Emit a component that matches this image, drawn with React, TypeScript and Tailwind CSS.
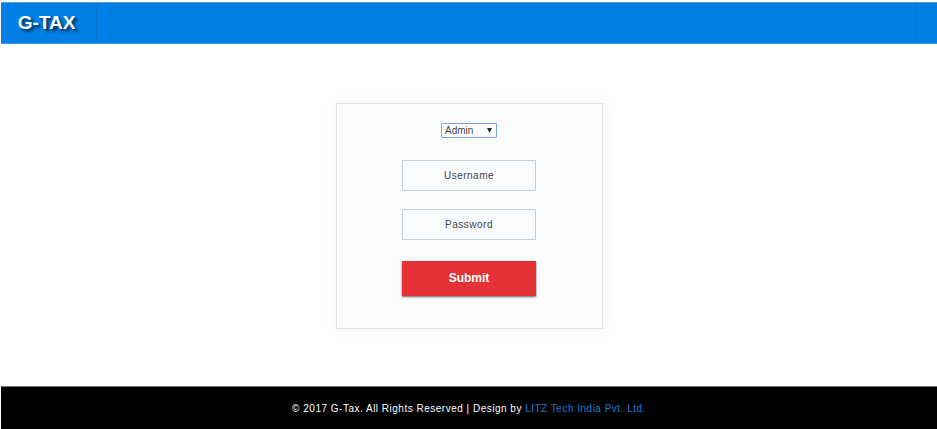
import React from 'react';

function Header() {
  return (
    <header className="flex h-[42px] items-stretch border-t border-b border-t-[#5f9bcb] border-b-[#3b9af0] bg-[#007fe6]">
      <a
        href="#"
        className="flex w-24 items-center justify-center border-r border-[#0873cb] pr-1 text-[19px] font-bold text-white [text-shadow:2px_2px_2px_#00406f,3px_3px_3px_#00508f]"
      >
        G-TAX
      </a>
      <div className="grow border-r border-[#0873cb]" />
      <div className="w-[21px]" />
    </header>
  );
}

function Field({ label, type }: { label: string; type: string }) {
  return (
    <input
      type={type}
      aria-label={label}
      placeholder={label}
      className="h-[31px] w-full border border-[#c8cdd0] bg-[#fafbfd] text-center text-[10px] tracking-wider text-[#444] outline-none placeholder:text-[#444]"
    />
  );
}

function LoginForm() {
  return (
    <form
      onSubmit={(e) => e.preventDefault()}
      className="flex w-[267px] flex-col items-center border border-[#e0e2e4] bg-[#fafbfd] px-16 pt-[19px] pb-8 shadow-[0_0_12px_rgba(0,0,0,0.06)]"
    >
      <div className="relative">
        <select
          aria-label="Role"
          className="block h-[15px] w-14 appearance-none rounded-[1px] border border-[#7aa5e8] bg-white pl-[3px] text-[10px] leading-3 text-[#444] outline-none"
        >
          <option>Admin</option>
          <option>User</option>
        </select>
        <svg
          className="pointer-events-none absolute top-[5px] right-[5px]"
          width="5"
          height="5"
          viewBox="0 0 5 5"
          aria-hidden="true"
        >
          <path d="M0 0h5L2.5 5z" fill="#222" />
        </svg>
      </div>
      <div className="mt-[22px] flex w-[134px] flex-col gap-[18px]">
        <Field label="Username" type="text" />
        <Field label="Password" type="password" />
      </div>
      <button
        type="submit"
        className="mt-[21px] h-[35px] w-[134px] bg-[#e53238] pb-0.5 text-[12px] font-bold text-white shadow-[0_1px_2px_rgba(0,0,0,0.6)]"
      >
        Submit
      </button>
    </form>
  );
}

function Footer() {
  return (
    <footer className="flex h-[43px] items-center justify-center border-t border-[#777] bg-black text-[10px] tracking-wider text-white">
      <p>
        © 2017 G-Tax. All Rights Reserved | Design by{' '}
        <a href="#" className="text-[#0f7fdc]">
          LITZ Tech India Pvt. Ltd.
        </a>
      </p>
    </footer>
  );
}

export default function App() {
  return (
    <div className="flex min-h-screen flex-col bg-white pt-0.5 pl-px font-['Liberation_Sans',Arial,sans-serif]">
      <Header />
      <main className="flex grow items-center justify-center pt-8 pb-[30px]">
        <LoginForm />
      </main>
      <Footer />
    </div>
  );
}
